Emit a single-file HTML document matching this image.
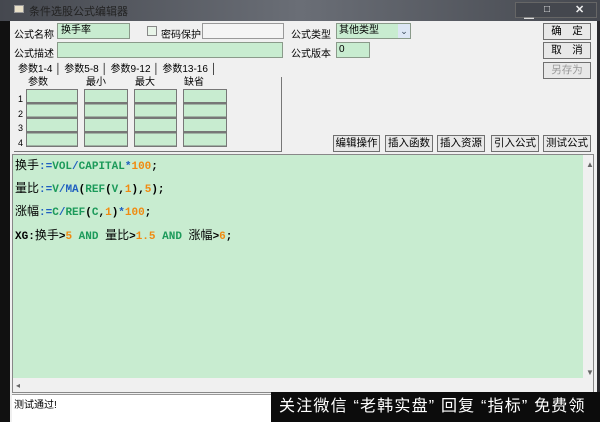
<!DOCTYPE html><html><head><meta charset="utf-8"><style>
*{margin:0;padding:0;box-sizing:border-box}
body{width:600px;height:422px;overflow:hidden;background:#2a2a2e;position:relative;font-family:"Liberation Sans","Noto Sans CJK SC",sans-serif;font-size:10px;color:#000}
.a{position:absolute}
.g{background:#c8ecd0;border:1px solid #8a9a8a}
.btn{position:absolute;background:#e8e8e8;border:1px solid #707070;text-align:center;line-height:15px;font-size:10.5px}
.code{font-family:"Liberation Mono","Noto Sans CJK SC",monospace;font-weight:bold;font-size:11px;position:absolute;left:15px}
.code .c{font-weight:normal;font-family:"Noto Sans CJK SC",sans-serif;font-size:12px}
.b{color:#1f5fc0}.n{color:#f08a10}.k{color:#1c9a5a}
</style></head><body>
<div class="a" style="left:0;top:0;width:600px;height:21px;background:linear-gradient(90deg,#45484f,#6a6e76 50%,#45484f)"></div>
<div class="a" style="left:14px;top:5px;width:10px;height:8px;background:#e8e0c8;border:1px solid #999"></div>
<div class="a" style="left:29px;top:3px;color:#222;font-size:11px">条件选股公式编辑器</div>
<div class="a" style="left:515px;top:2px;width:82px;height:16px;background:#44474e;border:1px solid #666"></div>
<div class="a" style="left:524px;top:6px;color:#ddd;font-size:10px">▁</div>
<div class="a" style="left:544px;top:4px;color:#eee;font-size:10px">□</div>
<div class="a" style="left:575px;top:3px;color:#eee;font-size:11px;font-weight:bold">✕</div>
<div class="a" style="left:0;top:21px;width:10px;height:401px;background:#111"></div>
<div class="a" style="left:10px;top:21px;width:587px;height:401px;background:#f0f0f0"></div>
<div class="a" style="left:14px;top:26px">公式名称</div>
<div class="a g" style="left:57px;top:23px;width:73px;height:16px;padding-left:3px;line-height:14px">换手率</div>
<div class="a" style="left:147px;top:26px;width:10px;height:10px;border:1px solid #888;background:#e8f4e8"></div>
<div class="a" style="left:161px;top:26px">密码保护</div>
<div class="a" style="left:202px;top:23px;width:82px;height:16px;border:1px solid #999;background:#f4f4f4"></div>
<div class="a" style="left:14px;top:45px">公式描述</div>
<div class="a g" style="left:57px;top:42px;width:226px;height:16px"></div>
<div class="a" style="left:291px;top:26px">公式类型</div>
<div class="a g" style="left:336px;top:23px;width:75px;height:16px;padding-left:2px;line-height:14px">其他类型</div>
<div class="a" style="left:398px;top:24px;width:12px;height:14px;background:#dce6f4;color:#345;font-size:9px;text-align:center;line-height:14px">⌄</div>
<div class="a" style="left:291px;top:45px">公式版本</div>
<div class="a g" style="left:336px;top:42px;width:34px;height:16px;padding-left:2px;line-height:14px">0</div>
<div class="btn" style="left:543px;top:23px;width:48px;height:17px">确　定</div>
<div class="btn" style="left:543px;top:42px;width:48px;height:17px">取　消</div>
<div class="btn" style="left:543px;top:62px;width:48px;height:17px;color:#999">另存为</div>
<div class="a" style="left:18px;top:64px;font-size:10px;line-height:12px">参数1-4 │ 参数5-8 │ 参数9-12 │ 参数13-16 │</div>
<div class="a" style="left:14px;top:77px;width:268px;height:75px;border-right:1px solid #777;border-bottom:1px solid #777"></div>
<div class="a" style="left:28px;top:77px;font-size:10px;line-height:11px">参数</div>
<div class="a" style="left:86px;top:77px;font-size:10px;line-height:11px">最小</div>
<div class="a" style="left:135px;top:77px;font-size:10px;line-height:11px">最大</div>
<div class="a" style="left:184px;top:77px;font-size:10px;line-height:11px">缺省</div>
<div class="a" style="left:18px;top:92px;font-size:9px;line-height:14.5px">1<br>2<br>3<br>4</div>
<div class="a" style="left:26px;top:89px;width:52px;height:58px;background:repeating-linear-gradient(#c8ecd0 0 12px,#777 12px 14.5px);border:1px solid #777"></div>
<div class="a" style="left:84px;top:89px;width:44px;height:58px;background:repeating-linear-gradient(#c8ecd0 0 12px,#777 12px 14.5px);border:1px solid #777"></div>
<div class="a" style="left:134px;top:89px;width:43px;height:58px;background:repeating-linear-gradient(#c8ecd0 0 12px,#777 12px 14.5px);border:1px solid #777"></div>
<div class="a" style="left:183px;top:89px;width:44px;height:58px;background:repeating-linear-gradient(#c8ecd0 0 12px,#777 12px 14.5px);border:1px solid #777"></div>
<div class="btn" style="left:333px;top:135px;width:47px;height:17px">编辑操作</div>
<div class="btn" style="left:385px;top:135px;width:48px;height:17px">插入函数</div>
<div class="btn" style="left:437px;top:135px;width:48px;height:17px">插入资源</div>
<div class="btn" style="left:491px;top:135px;width:48px;height:17px">引入公式</div>
<div class="btn" style="left:543px;top:135px;width:48px;height:17px">测试公式</div>
<div class="a" style="left:12px;top:154px;width:582px;height:239px;border:1px solid #888;background:#f0f0f0"></div>
<div class="a" style="left:13px;top:155px;width:570px;height:223px;background:#c8ecd0"></div>
<div class="a" style="left:586px;top:160px;font-size:8px;color:#666">▲</div>
<div class="a" style="left:586px;top:368px;font-size:8px;color:#666">▼</div>
<div class="a" style="left:16px;top:381px;font-size:8px;color:#666">◂</div>
<div class="code" style="top:156px"><span class="c">换手</span><span class="b">:=</span><span class="k">VOL</span><span class="b">/</span><span class="k">CAPITAL</span><span class="b">*</span><span class="n">100</span>;</div>
<div class="code" style="top:179px"><span class="c">量比</span><span class="b">:=</span><span class="k">V</span><span class="b">/</span><span class="b">MA</span>(<span class="k">REF</span>(<span class="k">V</span>,<span class="n">1</span>),<span class="n">5</span>);</div>
<div class="code" style="top:202px"><span class="c">涨幅</span><span class="b">:=</span><span class="k">C</span><span class="b">/</span><span class="k">REF</span>(<span class="k">C</span>,<span class="n">1</span>)<span class="b">*</span><span class="n">100</span>;</div>
<div class="code" style="top:226px">XG:<span class="c">换手</span>&gt;<span class="n">5</span> <span class="k">AND</span> <span class="c">量比</span>&gt;<span class="n">1.5</span> <span class="k">AND</span> <span class="c">涨幅</span>&gt;<span class="n">6</span>;</div>
<div class="a" style="left:12px;top:394px;width:585px;height:28px;background:#fff;border-top:1px solid #999"></div>
<div class="a" style="left:14px;top:396px;font-size:10px">测试通过!</div>
<div class="a" style="left:271px;top:392px;width:329px;height:30px;background:#0c0c0c;color:#fff;font-size:16px;line-height:30px;padding-left:8px;white-space:nowrap;letter-spacing:1.2px">关注微信 “老韩实盘” 回复 “指标” 免费领</div>
</body></html>
